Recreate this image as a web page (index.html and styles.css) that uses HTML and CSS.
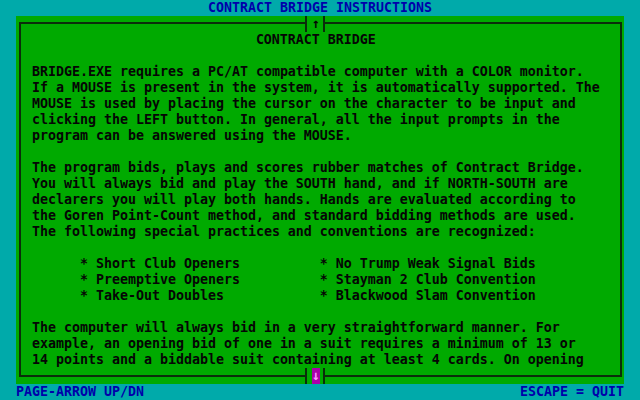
FILE: index.html
```html
<!DOCTYPE html>
<html>
<head>
<meta charset="utf-8">
<link rel="stylesheet" href="styles.css">
</head>
<body>
<div class="screen">
  <header class="title">CONTRACT BRIDGE INSTRUCTIONS</header>
  <main class="panel">
    <div class="frame">
      <div class="content">
        <div class="heading">CONTRACT BRIDGE</div>
        <div class="para">
          <div class="line">BRIDGE.EXE requires a PC/AT compatible computer with a COLOR monitor.</div>
          <div class="line">If a MOUSE is present in the system, it is automatically supported. The</div>
          <div class="line">MOUSE is used by placing the cursor on the character to be input and</div>
          <div class="line">clicking the LEFT button. In general, all the input prompts in the</div>
          <div class="line">program can be answered using the MOUSE.</div>
        </div>
        <div class="para">
          <div class="line">The program bids, plays and scores rubber matches of Contract Bridge.</div>
          <div class="line">You will always bid and play the SOUTH hand, and if NORTH-SOUTH are</div>
          <div class="line">declarers you will play both hands. Hands are evaluated according to</div>
          <div class="line">the Goren Point-Count method, and standard bidding methods are used.</div>
          <div class="line">The following special practices and conventions are recognized:</div>
        </div>
        <div class="para bullets">
          <div class="line">* Short Club Openers</div>
          <div class="line">* No Trump Weak Signal Bids</div>
          <div class="line">* Preemptive Openers</div>
          <div class="line">* Stayman 2 Club Convention</div>
          <div class="line">* Take-Out Doubles</div>
          <div class="line">* Blackwood Slam Convention</div>
        </div>
        <div class="para">
          <div class="line">The computer will always bid in a very straightforward manner. For</div>
          <div class="line">example, an opening bid of one in a suit requires a minimum of 13 or</div>
          <div class="line">14 points and a biddable suit containing at least 4 cards. On opening</div>
        </div>
      </div>
    </div>
    <div class="scroll up"><span class="arrow">↑</span></div>
    <div class="scroll down"><span class="arrow">↓</span></div>
  </main>
  <footer class="footer">
    <span class="line">PAGE-ARROW UP/DN</span>
    <span class="line">ESCAPE = QUIT</span>
  </footer>
</div>
</body>
</html>
```

FILE: styles.css
```css
html, body {
  margin: 0;
  padding: 0;
  background: #00aaaa;
}

.screen {
  width: 640px;
  height: 400px;
  overflow: hidden;
  background: #00aaaa;
  font-family: "DejaVu Sans Mono", "Liberation Mono", monospace;
  font-size: 13.29px;
  font-weight: bold;
  line-height: 16px;
  color: #050505;
  display: flex;
  flex-direction: column;
}

.title {
  height: 16px;
  flex: none;
  color: #0000aa;
  padding-left: 208px;
  white-space: pre;
}

.panel {
  position: relative;
  flex: none;
  margin: 0 16px;
  height: 368px;
  box-sizing: border-box;
  padding: 6px 2px 7px 3px;
  background: #00aa00;
}

.frame {
  height: 100%;
  box-sizing: border-box;
  border: 2px solid #0b2d0b;
  padding: 8px 0 0 11px;
  overflow: hidden;
}

.heading {
  padding-left: 28ch;
  height: 16px;
  white-space: pre;
}

.para {
  margin-top: 16px;
}

.line {
  height: 16px;
  white-space: pre;
}

.bullets {
  display: grid;
  grid-template-columns: 30ch auto;
  padding-left: 6ch;
}

.scroll {
  position: absolute;
  left: 289px;
  width: 20px;
  height: 16px;
  box-sizing: border-box;
  border-left: 2px solid #0b2d0b;
  border-right: 2px solid #0b2d0b;
  background: #00aa00;
}

.scroll.up {
  top: 0;
}

.scroll.down {
  top: 352px;
}

.arrow {
  position: absolute;
  left: 5px;
  top: 0;
  width: 8px;
  height: 16px;
  text-align: center;
}

.down .arrow {
  background: #aa00aa;
  color: #ff99ff;
}

.footer {
  height: 16px;
  flex: none;
  display: flex;
  justify-content: space-between;
  padding: 0 16px;
  color: #0000aa;
}
```
